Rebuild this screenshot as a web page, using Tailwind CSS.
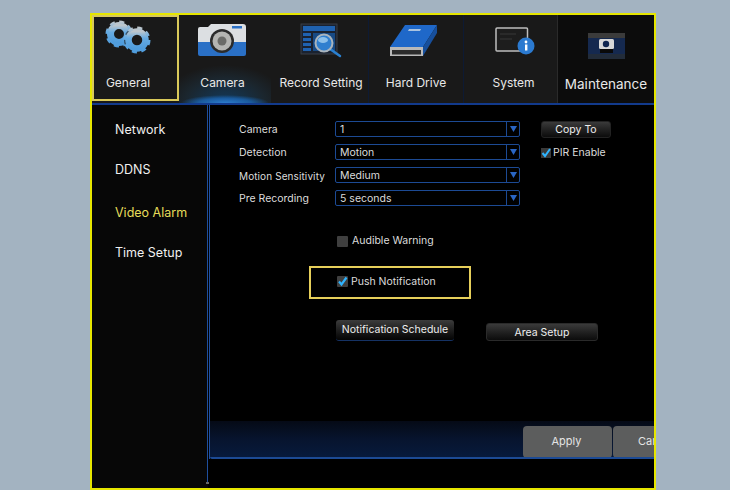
<!DOCTYPE html>
<html>
<head>
<meta charset="utf-8">
<script src="https://cdn.jsdelivr.net/npm/@tailwindcss/browser@4"></script>
</head>
<body class="m-0">
<div class="w-[730px] h-[490px] overflow-hidden bg-[#a3b3c1] pt-[13px] pl-[90px] font-['Inter','Liberation_Sans',sans-serif]">
  <div class="w-[566px] h-[477px] border-2 border-[#e6e600] bg-black flex flex-col overflow-hidden">
    <!-- Tabs -->
    <div class="h-[88px] shrink-0 flex bg-[#191919] text-[#e8e8e8] text-[12px]">
      <div class="w-[87px] h-[86px] border-2 border-[#d9c95a] flex flex-col items-center -mr-px box-border">
        <svg width="83" height="48" viewBox="94 17 83 48">
          <defs>
            <linearGradient id="g" x1="0" y1="0" x2="0" y2="1"><stop offset="0" stop-color="#bcc6cd"/><stop offset=".4" stop-color="#66abe2"/><stop offset="1" stop-color="#4f9cdc"/></linearGradient>
          </defs>
          <circle cx="119" cy="34" r="8.5" fill="none" stroke="url(#g)" stroke-width="7"/>
          <circle cx="119" cy="34" r="12" fill="none" stroke="url(#g)" stroke-width="3" stroke-dasharray="5 4.4"/>
          <circle cx="137" cy="40" r="13" fill="#191919" opacity=".6"/>
          <circle cx="137" cy="40" r="8.5" fill="none" stroke="url(#g)" stroke-width="6.5"/>
          <circle cx="137" cy="40" r="12" fill="none" stroke="url(#g)" stroke-width="3" stroke-dasharray="5 4.4"/>
        </svg>
        <span class="mt-[10px] mr-[15px] leading-4">General</span>
      </div>
      <div class="w-[92px] ml-px flex flex-col items-center bg-[radial-gradient(ellipse_44px_8px_at_50%_100%,#2c7cce_0%,#1a5a9c_60%,transparent_100%),radial-gradient(ellipse_62px_38px_at_50%_100%,#123a5c_0%,#1b262e_65%,#191919_100%)]">
        <svg width="92" height="50" viewBox="179 15 92 50">
          <path d="M198 29q0-2 2-2h8l3-3h32q3 0 3 3v15h-48z" fill="#dcdfe2"/>
          <path d="M198 42h48v12q0 2-2 2h-44q-2 0-2-2z" fill="#2a70c6"/>
          <rect x="232" y="26" width="10" height="2.5" fill="#2a70c6"/>
          <circle cx="222" cy="41" r="12" fill="#2b2b2b"/>
          <circle cx="222" cy="41" r="9.5" fill="#b5b5b2"/>
          <circle cx="222" cy="41" r="4.5" fill="#6b6b68"/>
        </svg>
        <span class="mt-[10px] mr-[5px] leading-4">Camera</span>
      </div>
      <div class="w-[98px] flex flex-col items-center border-r border-[#0d1a33]">
        <svg width="97" height="50" viewBox="271 15 97 50">
          <rect x="301" y="24" width="36" height="30" fill="#1a2230" stroke="#3a3f46"/>
          <rect x="303" y="26" width="32" height="5" fill="#1f62b0"/>
          <rect x="303" y="33" width="8" height="3" fill="#1f62b0"/>
          <rect x="303" y="38" width="8" height="3" fill="#1f62b0"/>
          <rect x="303" y="43" width="8" height="3" fill="#1f62b0"/>
          <rect x="303" y="48" width="8" height="3" fill="#1f62b0"/>
          <rect x="313" y="33" width="22" height="18" fill="#174a85"/>
          <line x1="330" y1="49" x2="340" y2="56" stroke="#2a80d0" stroke-width="2.5" stroke-linecap="round"/>
          <circle cx="324" cy="43" r="8.5" fill="#2f7fcf" stroke="#aab4bc" stroke-width="2"/>
          <ellipse cx="323" cy="40" rx="5" ry="3" fill="#8cc0ea"/>
        </svg>
        <span class="mt-[10px] ml-[3px] leading-4 whitespace-nowrap">Record Setting</span>
      </div>
      <div class="w-[95px] flex flex-col items-center border-r border-[#0d1a33]">
        <svg width="94" height="50" viewBox="369 15 94 50">
          <path d="M405 25h32l-14 22h-33z" fill="#1f68c9"/>
          <path d="M437 25v8l-14 23v-9z" fill="#174f9c"/>
          <path d="M409 29h12l-1 2h-12z" fill="#a9c3e0"/>
          <path d="M390 47h33v9h-33z" fill="#b9b9b9"/>
          <rect x="392" y="50" width="29" height="4.5" fill="#2c2c2c"/>
        </svg>
        <span class="mt-[10px] leading-4">Hard Drive</span>
      </div>
      <div class="w-[94px] flex flex-col items-center border-r border-[#2a2a2a]">
        <svg width="93" height="50" viewBox="465 15 93 50">
          <rect x="497" y="28" width="31.5" height="23" rx="1" fill="#1d1d1d" stroke="#bdbdbd" stroke-width="1.5"/>
          <rect x="501" y="33" width="16" height="2" fill="#2a2a2a"/>
          <rect x="501" y="38" width="12" height="2" fill="#2a2a2a"/>
          <circle cx="527" cy="46" r="8.5" fill="#2b7ad0"/>
          <circle cx="527" cy="42" r="1.4" fill="#fff"/>
          <rect x="526" y="44.5" width="2.4" height="6" fill="#fff"/>
        </svg>
        <span class="mt-[10px] ml-[6px] leading-4">System</span>
      </div>
      <div class="flex-1 flex flex-col items-center bg-[#0c0c0c]">
        <svg width="94" height="50" viewBox="559 15 94 50">
          <rect x="588" y="33" width="37" height="26" fill="#15294f"/>
          <rect x="588" y="33" width="37" height="5" fill="#3b3b3b"/>
          <rect x="588" y="54" width="37" height="5" fill="#222c3a"/>
          <rect x="599" y="39" width="15" height="10" rx="1.5" fill="#d8d8d8"/>
          <circle cx="606" cy="44" r="3.2" fill="#10254f"/>
          <rect x="600" y="49" width="13" height="4" fill="#0a0a0a"/>
        </svg>
        <span class="mt-[11px] leading-4 text-[13.5px]">Maintenance</span>
      </div>
    </div>
    <div class="h-[2px] shrink-0 bg-[#123a8c]"></div>
    <!-- Body -->
    <div class="flex-1 flex min-h-0">
      <!-- Sidebar -->
      <div class="w-[116px] shrink-0 bg-[#070707] relative">
        <div class="h-[379px] border-r border-[#1f4f9e] pl-[23px] pt-[17px] text-[12.5px] leading-4 text-[#f0f0f0] flex flex-col gap-[24px]">
          <span>Network</span>
          <span>DDNS</span>
          <span class="text-[#e6dc5a] mt-[3px]">Video Alarm</span>
          <span>Time Setup</span>
        </div>
        <div class="absolute right-[-1px] top-[377px] w-[3px] h-[2px] bg-[#666]"></div>
      </div>
      <!-- Main -->
      <div class="flex-1 min-w-0 pl-px">
        <div class="h-[354px] border-l border-[#1f4f9e] flex flex-col">
          <div class="flex-1 min-h-0 pt-[16px] pl-[29px] text-[10.5px] text-[#dcdcdc]">
            <div class="flex">
              <div class="w-[96px] flex flex-col gap-[7px]">
                <span class="h-4 leading-[18px]">Camera</span>
                <span class="h-4 leading-[18px]">Detection</span>
                <span class="h-4 leading-[18px] whitespace-nowrap text-[10px] tracking-[0.1px]">Motion Sensitivity</span>
                <span class="h-4 leading-[18px]">Pre Recording</span>
              </div>
              <div class="w-[185px] flex flex-col gap-[7px]">
                <div class="h-4 flex border border-[#1c4a94] rounded-[2px]"><span class="flex-1 pl-[4px] leading-[16px]">1</span><span class="w-[13px] border-l border-[#1c4a94] flex items-center justify-center"><svg width="7" height="6" viewBox="0 0 7 6"><path d="M0 0h7L3.5 6z" fill="#2a66c4"/></svg></span></div>
                <div class="h-4 flex border border-[#1c4a94] rounded-[2px]"><span class="flex-1 pl-[4px] leading-[16px]">Motion</span><span class="w-[13px] border-l border-[#1c4a94] flex items-center justify-center"><svg width="7" height="6" viewBox="0 0 7 6"><path d="M0 0h7L3.5 6z" fill="#2a66c4"/></svg></span></div>
                <div class="h-4 flex border border-[#1c4a94] rounded-[2px]"><span class="flex-1 pl-[4px] leading-[16px]">Medium</span><span class="w-[13px] border-l border-[#1c4a94] flex items-center justify-center"><svg width="7" height="6" viewBox="0 0 7 6"><path d="M0 0h7L3.5 6z" fill="#2a66c4"/></svg></span></div>
                <div class="h-4 flex border border-[#1c4a94] rounded-[2px]"><span class="flex-1 pl-[4px] leading-[16px]">5 seconds</span><span class="w-[13px] border-l border-[#1c4a94] flex items-center justify-center"><svg width="7" height="6" viewBox="0 0 7 6"><path d="M0 0h7L3.5 6z" fill="#2a66c4"/></svg></span></div>
              </div>
              <div class="ml-[21px] flex flex-col">
                <div class="w-[70px] h-[17px] rounded-[3px] bg-gradient-to-b from-[#3a3a3a] to-[#0c0c0c] border border-[#222] text-center leading-[15px] text-[#eee]">Copy To</div>
                <div class="mt-[7px] flex items-center gap-[2px]">
                  <span class="w-[10px] h-[10px] bg-[#3a3a3a] flex items-center justify-center"><svg width="10" height="10" viewBox="0 0 10 10"><path d="M1.5 5l2.5 3 5-7" fill="none" stroke="#2fb4ff" stroke-width="2"/></svg></span>
                  <span class="leading-4">PIR Enable</span>
                </div>
              </div>
            </div>
            <div class="mt-[28px] ml-[98px] flex items-center gap-[4px] h-[14px]">
              <span class="w-[11px] h-[11px] bg-[#3f3f3f] rounded-[1px]"></span>
              <span>Audible Warning</span>
            </div>
            <div class="mt-[18px] ml-[70px] w-[162px] h-[33px] border-2 border-[#e6cf5a] pl-[26px] pb-[2px] flex items-center gap-[3px]">
              <span class="w-[11px] h-[11px] bg-[#3f3f3f] rounded-[1px] flex items-center justify-center"><svg width="11" height="11" viewBox="0 0 11 11"><path d="M2 5.5l2.5 3 5-7" fill="none" stroke="#2fb4ff" stroke-width="2.2"/></svg></span>
              <span>Push Notification</span>
            </div>
            <div class="mt-[21px] ml-[97px] flex items-end">
              <div class="w-[118px] h-[21px] rounded-[3px] bg-gradient-to-b from-[#3c3c3c] to-[#050505] border-b border-[#153264] text-center leading-[20px] text-[#eee] whitespace-nowrap">Notification Schedule</div>
              <div class="ml-[32px] w-[112px] h-[18px] rounded-[3px] bg-gradient-to-b from-[#3a3a3a] to-[#0c0c0c] border border-[#2a2a2a] text-center leading-[17px] text-[#eee]">Area Setup</div>
            </div>
          </div>
          <div class="h-[38px] shrink-0 border-b-2 border-[#1c4a94] rounded-bl-[2px] bg-gradient-to-b from-[#050a16] via-[#07142e] to-[#071a3c] flex items-end justify-end overflow-hidden text-[11px] text-[#e4e4e4]">
            <div class="w-[89px] h-[32px] mb-[-1px] rounded-[4px] bg-[#5c5d5d] pr-[2px] text-center leading-[30px] shrink-0">Apply</div>
            <div class="w-[41px] h-[32px] mb-[-1px] ml-px rounded-tl-[4px] rounded-bl-[4px] bg-[#5c5d5d] pl-[25px] leading-[30px] shrink-0 overflow-hidden whitespace-nowrap">Cancel</div>
          </div>
        </div>
      </div>
    </div>
  </div>
</div>
</body>
</html>
